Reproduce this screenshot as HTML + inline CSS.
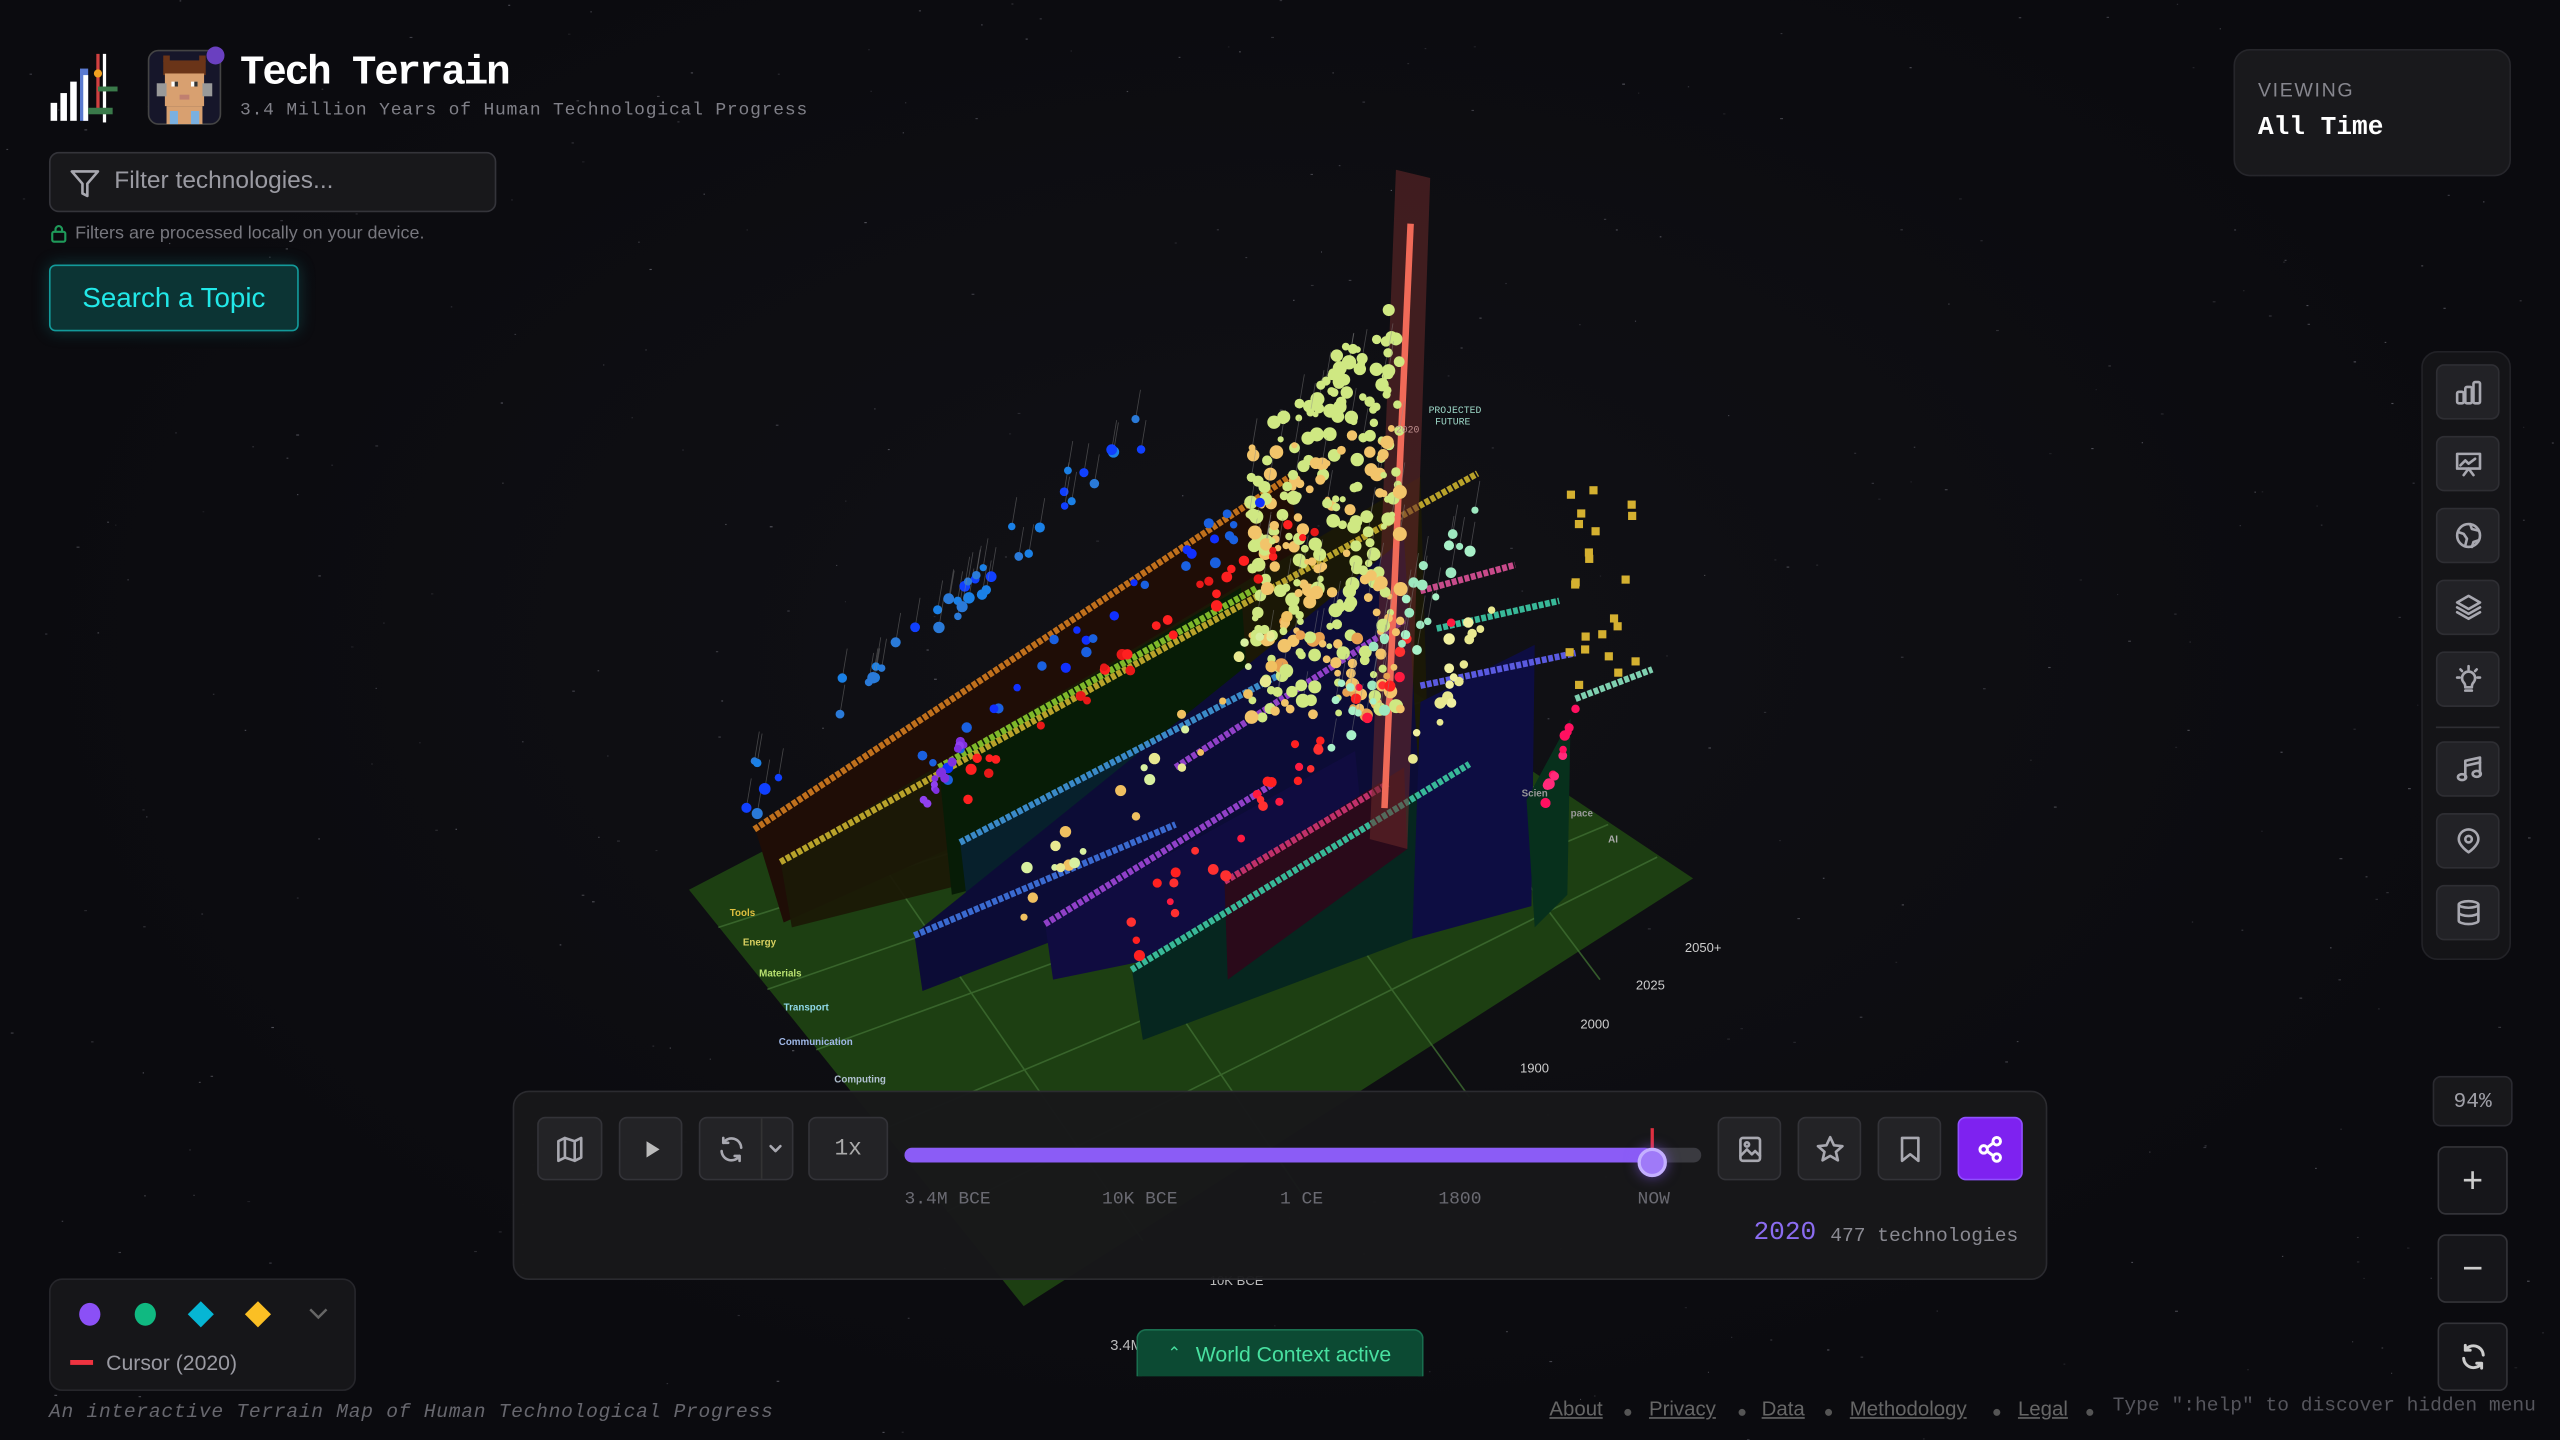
<!DOCTYPE html>
<html><head><meta charset="utf-8">
<style>
*{box-sizing:border-box;margin:0;padding:0}
html,body{width:2560px;height:1440px;overflow:hidden;background:#0b0b0f}
#root{position:absolute;left:0;top:0;width:1568px;height:882px;transform:scale(1.632653);transform-origin:0 0;font-family:"Liberation Sans",sans-serif;color:#ddd;
background:radial-gradient(ellipse at 50% 45%,#111116 0%,#0b0b0f 70%)}
.abs{position:absolute}
.mono{font-family:"Liberation Mono",monospace}
.btn{position:absolute;background:#232326;border:1px solid #333338;border-radius:5px;display:flex;align-items:center;justify-content:center}
.tb{position:absolute;left:8px;width:39px;height:34px;background:#222226;border:1px solid #2e2e33;border-radius:5px;display:flex;align-items:center;justify-content:center}
svg.ic{fill:none;stroke:#a8a8b0;stroke-width:1.6;stroke-linecap:round;stroke-linejoin:round}
.lk{position:absolute;top:856px;font-size:12.5px;color:#666;text-decoration:underline}
.dot{position:absolute;top:860px;font-size:10px;color:#555}
</style></head><body>
<div id="root">
<svg id="stars" class="abs" style="left:0;top:0" width="1568" height="882"></svg>

<svg id="terr" class="abs" style="left:0;top:0" width="1568" height="882">
 <polygon points="422,545 627,800 1037,538 860,420 700,400" fill="#1d3f12"/>
 <g stroke="#3f6e32" stroke-width="1" opacity=".8">
  <line x1="440" y1="568" x2="870" y2="430"/><line x1="470" y1="606" x2="905" y2="455"/>
  <line x1="500" y1="643" x2="945" y2="480"/><line x1="540" y1="692" x2="985" y2="505"/>
  <line x1="580" y1="742" x2="1015" y2="525"/>
  <line x1="520" y1="500" x2="700" y2="760"/><line x1="620" y1="470" x2="800" y2="735"/>
  <line x1="740" y1="450" x2="900" y2="672"/><line x1="860" y1="440" x2="980" y2="600"/>
 </g>
 <polygon points="462,506 790,290 805,420 480,565" fill="#1f0d06"/>
 <polygon points="478,527 870,292 875,470 485,568" fill="#1b1906" opacity=".95"/>
 <polygon points="575,470 760,360 770,500 583,548" fill="#071c06"/>
 <polygon points="588,515 790,410 800,530 596,585" fill="#07202c"/>
 <polygon points="560,572 860,330 870,490 565,607" fill="#0c0c36"/>
 <polygon points="640,565 830,460 840,560 645,600" fill="#100c40"/>
 <polygon points="693,592 900,465 905,560 700,637" fill="#06261f"/>
 <polygon points="750,540 860,470 862,520 752,600" fill="#2a0a1a"/>
 <polygon points="865,575 870,430 940,395 938,555" fill="#0d0d42"/>
 <polygon points="935,490 962,440 960,548 940,568" fill="#07301c"/>
 <g stroke-width="4" stroke-dasharray="3 1" fill="none">
  <line x1="462" y1="508" x2="790" y2="292" stroke="#c0701c"/>
  <line x1="478" y1="528" x2="905" y2="290" stroke="#b8a22a"/>
  <line x1="575" y1="470" x2="770" y2="360" stroke="#7fb82a"/>
  <line x1="588" y1="516" x2="790" y2="410" stroke="#3a8ac8"/>
  <line x1="560" y1="573" x2="720" y2="505" stroke="#3a6ad0"/>
  <line x1="640" y1="566" x2="780" y2="480" stroke="#9040c8"/>
  <line x1="720" y1="470" x2="860" y2="380" stroke="#9040c8"/>
  <line x1="693" y1="594" x2="900" y2="468" stroke="#38b898"/>
  <line x1="750" y1="540" x2="850" y2="480" stroke="#c0306a"/>
  <line x1="870" y1="362" x2="928" y2="346" stroke="#c84a8a"/>
  <line x1="870" y1="420" x2="965" y2="400" stroke="#5a5ae0"/>
  <line x1="880" y1="385" x2="955" y2="368" stroke="#38b898"/>
  <line x1="965" y1="428" x2="1012" y2="410" stroke="#7fd0b0"/>
 </g>
 <polygon points="855,104 876,109 862,520 839,514" fill="#6a2a2a" opacity=".55"/>
 <line x1="864" y1="137" x2="848" y2="495" stroke="#f06a58" stroke-width="4"/>
 <g id="dots"></g>
 <g font-family="Liberation Sans,sans-serif" font-size="6" font-weight="bold">
  <text x="447" y="561" fill="#e0c040">Tools</text>
  <text x="455" y="579" fill="#d8d060">Energy</text>
  <text x="465" y="598" fill="#b8e070">Materials</text>
  <text x="480" y="619" fill="#90d8e8">Transport</text>
  <text x="477" y="640" fill="#a0b8e8">Communication</text>
  <text x="511" y="663" fill="#b0c0d0">Computing</text>
  <text x="985" y="516" fill="#aaa">AI</text>
  <text x="962" y="500" fill="#999">pace</text>
  <text x="932" y="488" fill="#999">Scien</text>
 </g>
 <g font-family="Liberation Sans,sans-serif" font-size="8" fill="#ccc">
  <text x="1032" y="583">2050+</text><text x="1002" y="606">2025</text>
  <text x="968" y="630">2000</text><text x="931" y="657">1900</text>
 </g>
 <text x="875" y="253" font-family="Liberation Mono,monospace" font-size="6" fill="#9ed8c8">PROJECTED</text>
 <text x="879" y="260" font-family="Liberation Mono,monospace" font-size="6" fill="#9ed8c8">FUTURE</text>
 <text x="855" y="265" font-family="Liberation Mono,monospace" font-size="6" fill="#c09090">2020</text>
 <text x="741" y="787" font-family="Liberation Sans,sans-serif" font-size="8" fill="#bbb">10K BCE</text>
 <text x="680" y="827" font-family="Liberation Sans,sans-serif" font-size="9" fill="#bbb">3.4M BCE</text>
</svg>

<svg class="abs" style="left:30px;top:32px" width="48" height="44">
 <rect x="1" y="31" width="4" height="11" fill="#fff"/><rect x="7" y="25" width="4" height="17" fill="#fff"/>
 <rect x="13" y="18" width="4" height="24" fill="#fff"/><rect x="19" y="10" width="5" height="32" fill="#5a7ad0"/>
 <rect x="21" y="14" width="3" height="28" fill="#fff"/><rect x="29" y="1" width="2" height="34" fill="#d04040"/>
 <rect x="33" y="1" width="2" height="42" fill="#fff"/><rect x="24" y="34" width="15" height="4" fill="#3a7a4a"/>
 <rect x="30" y="21" width="12" height="3" fill="#3a7a4a"/><circle cx="30" cy="13" r="2.5" fill="#f0a020"/>
</svg>
<svg class="abs" style="left:90px;top:28px" width="50" height="50">
 <rect x="1" y="3" width="44" height="45" rx="6" fill="#16162a" stroke="#444" stroke-width="1"/>
 <rect x="10" y="9" width="26" height="9" fill="#6a3418"/><rect x="10" y="6" width="4" height="4" fill="#6a3418"/><rect x="32" y="6" width="4" height="4" fill="#6a3418"/>
 <rect x="11" y="17" width="24" height="20" fill="#d8a070"/><rect x="6" y="23" width="6" height="8" fill="#999"/><rect x="34" y="23" width="6" height="8" fill="#999"/>
 <rect x="15" y="22" width="4" height="3" fill="#fff"/><rect x="27" y="22" width="4" height="3" fill="#fff"/>
 <rect x="17" y="22" width="2" height="3" fill="#333"/><rect x="29" y="22" width="2" height="3" fill="#333"/>
 <rect x="20" y="30" width="6" height="3" fill="#c08070"/>
 <rect x="12" y="37" width="22" height="11" fill="#d8a070"/><rect x="14" y="40" width="5" height="8" fill="#7ab0e0"/><rect x="27" y="40" width="5" height="8" fill="#7ab0e0"/>
 <circle cx="42" cy="6" r="5.5" fill="#6a40c0"/>
</svg>
<div class="abs mono" style="left:147px;top:30px;font-size:25px;font-weight:bold;color:#fff;letter-spacing:-1.3px">Tech Terrain</div>
<div class="abs mono" style="left:147px;top:62px;font-size:11px;color:#808088;letter-spacing:0.5px">3.4 Million Years of Human Technological Progress</div>

<div class="abs" style="left:30px;top:93px;width:274px;height:37px;background:#18181b;border:1px solid #34343a;border-radius:6px"></div>
<svg class="abs ic" style="left:42px;top:102px" width="20" height="20" viewBox="0 0 20 20"><path d="M2 3h16l-6.5 7.5V18l-3-1.5v-6z"/></svg>
<div class="abs" style="left:70px;top:102px;font-size:15px;color:#9a9aa2">Filter technologies...</div>
<svg class="abs" style="left:30px;top:137px" width="12" height="12" viewBox="0 0 12 12" fill="none" stroke="#1f9a5a" stroke-width="1.3"><rect x="2" y="5" width="8" height="6" rx="1"/><path d="M4 5V3.5a2 2 0 014 0V5"/></svg>
<div class="abs" style="left:46px;top:137px;font-size:11px;color:#77777e">Filters are processed locally on your device.</div>
<div class="abs" style="left:30px;top:162px;width:153px;height:41px;background:#0c3434;border:1.5px solid #139a9a;border-radius:4px;box-shadow:0 0 10px rgba(20,180,180,.25);color:#22e8e8;font-size:17px;display:flex;align-items:center;justify-content:center">Search a Topic</div>

<div class="abs" style="left:1368px;top:30px;width:170px;height:78px;background:#19191c;border:1px solid #26262b;border-radius:10px"></div>
<div class="abs" style="left:1383px;top:48px;font-size:12px;color:#86868e;letter-spacing:1px">VIEWING</div>
<div class="abs mono" style="left:1383px;top:69px;font-size:16px;font-weight:bold;color:#fff">All Time</div>

<div class="abs" style="left:1483px;top:215px;width:55px;height:373px;background:#141417;border:1px solid #222227;border-radius:10px">
 <div class="tb" style="top:7px"><svg class="ic" width="18" height="18" viewBox="0 0 18 18"><rect x="2" y="9" width="4" height="7" rx="1"/><rect x="7" y="6" width="4" height="10" rx="1"/><rect x="12" y="3" width="4" height="13" rx="1"/></svg></div>
 <div class="tb" style="top:51px"><svg class="ic" width="18" height="18" viewBox="0 0 18 18"><rect x="2" y="3" width="14" height="9"/><path d="M4 10l3-3 2 2 4-3M6 16l3-4 3 4"/></svg></div>
 <div class="tb" style="top:95px"><svg class="ic" width="18" height="18" viewBox="0 0 18 18"><circle cx="9" cy="9" r="7"/><path d="M3 7l3 1 2 3-1 4M10 2l1 3 4 1M11 16l1-3 3-1"/></svg></div>
 <div class="tb" style="top:139px"><svg class="ic" width="18" height="18" viewBox="0 0 18 18"><path d="M9 2l7 4-7 4-7-4zM2 9l7 4 7-4M2 12l7 4 7-4"/></svg></div>
 <div class="tb" style="top:183px"><svg class="ic" width="18" height="18" viewBox="0 0 18 18"><path d="M6 11a4 4 0 116 0c-1 1-1 2-1 3H7c0-1 0-2-1-3zM7 16h4M9 1v2M2 8h1.5M14.5 8H16M4 3l1 1M14 3l-1 1"/></svg></div>
 <div style="position:absolute;left:8px;top:229px;width:39px;height:1px;background:#2e2e33"></div>
 <div class="tb" style="top:238px"><svg class="ic" width="18" height="18" viewBox="0 0 18 18"><path d="M7 14V4l9-2v10"/><ellipse cx="5" cy="14" rx="2.5" ry="1.8"/><ellipse cx="14" cy="12" rx="2.5" ry="1.8"/><path d="M7 7l9-2"/></svg></div>
 <div class="tb" style="top:282px"><svg class="ic" width="18" height="18" viewBox="0 0 18 18"><path d="M9 16s-6-4-6-8a6 6 0 0112 0c0 4-6 8-6 8z"/><circle cx="9" cy="8" r="2"/></svg></div>
 <div class="tb" style="top:326px"><svg class="ic" width="18" height="18" viewBox="0 0 18 18"><ellipse cx="9" cy="4" rx="6" ry="2"/><path d="M3 4v10c0 1 3 2 6 2s6-1 6-2V4M3 9c0 1 3 2 6 2s6-1 6-2"/></svg></div>
</div>

<div class="abs mono" style="left:1490px;top:659px;width:49px;height:31px;background:#18181b;border:1px solid #2a2a30;border-radius:5px;color:#a0a0a8;font-size:13px;display:flex;align-items:center;justify-content:center">94%</div>
<div class="btn" style="left:1493px;top:702px;width:43px;height:42px;background:#16161a;color:#ccc;font-size:22px;font-weight:300">+</div>
<div class="btn" style="left:1493px;top:756px;width:43px;height:42px;background:#16161a;color:#ccc;font-size:22px">−</div>
<div class="btn" style="left:1493px;top:810px;width:43px;height:42px;background:#16161a"><svg class="ic" width="18" height="18" viewBox="0 0 18 18" style="stroke:#ccc;stroke-width:1.8"><path d="M15 8a6 6 0 00-11-3M3 10a6 6 0 0011 3M4 2v3h3M14 16v-3h-3"/></svg></div>

<div class="abs" style="left:314px;top:668px;width:940px;height:116px;background:#18181a;border:1px solid #2c2c31;border-radius:10px;opacity:.97"></div>
<div class="btn" style="left:329px;top:684px;width:40px;height:39px"><svg class="ic" width="18" height="18" viewBox="0 0 18 18"><path d="M2 4l4-2 6 2 4-2v12l-4 2-6-2-4 2zM6 2v12M12 4v12"/></svg></div>
<div class="btn" style="left:379px;top:684px;width:39px;height:39px"><svg width="12" height="12" viewBox="0 0 12 12"><path d="M3 1l8 5-8 5z" fill="#bbb"/></svg></div>
<div class="btn" style="left:428px;top:684px;width:58px;height:39px;justify-content:flex-start;padding-left:10px"><svg class="ic" width="18" height="18" viewBox="0 0 18 18"><path d="M15 8a6 6 0 00-11-3M3 10a6 6 0 0011 3M4 2v3h3M14 16v-3h-3"/></svg><div style="position:absolute;left:37px;top:0;width:1px;height:37px;background:#333"></div><svg class="ic" style="position:absolute;left:41px;top:14px" width="10" height="10" viewBox="0 0 10 10"><path d="M2 3l3 3 3-3"/></svg></div>
<div class="btn mono" style="left:495px;top:684px;width:49px;height:39px;color:#aaa;font-size:14px">1x</div>
<div class="abs" style="left:554px;top:703px;width:488px;height:9px;background:#3a3a40;border-radius:5px"></div>
<div class="abs" style="left:554px;top:703px;width:458px;height:9px;background:#8b5cf6;border-radius:5px"></div>
<div class="abs" style="left:1011px;top:691px;width:2px;height:14px;background:#e03040"></div>
<div class="abs" style="left:1003px;top:703px;width:18px;height:18px;background:#9f7af8;border:2px solid #c4b0ff;border-radius:50%;box-shadow:0 0 8px rgba(139,92,246,.6)"></div>
<div class="abs mono" style="top:729px;left:554px;font-size:11px;color:#6a6a72">3.4M BCE</div>
<div class="abs mono" style="top:729px;left:675px;font-size:11px;color:#6a6a72">10K BCE</div>
<div class="abs mono" style="top:729px;left:784px;font-size:11px;color:#6a6a72">1 CE</div>
<div class="abs mono" style="top:729px;left:881px;font-size:11px;color:#6a6a72">1800</div>
<div class="abs mono" style="top:729px;left:1003px;font-size:11px;color:#6a6a72">NOW</div>
<div class="btn" style="left:1052px;top:684px;width:39px;height:39px"><svg class="ic" width="18" height="18" viewBox="0 0 18 18"><rect x="3" y="2" width="12" height="14" rx="1.5"/><circle cx="7" cy="6" r="1.3"/><path d="M3 13l4-4 3 3 2-2 3 3"/></svg></div>
<div class="btn" style="left:1101px;top:684px;width:39px;height:39px"><svg class="ic" width="18" height="18" viewBox="0 0 18 18"><path d="M9 1.5l2.3 5 5.2.5-4 3.5 1.2 5.2L9 13l-4.7 2.7 1.2-5.2-4-3.5 5.2-.5z"/></svg></div>
<div class="btn" style="left:1150px;top:684px;width:39px;height:39px"><svg class="ic" width="18" height="18" viewBox="0 0 18 18"><path d="M4 2h10v14l-5-4-5 4z"/></svg></div>
<div class="btn" style="left:1199px;top:684px;width:40px;height:39px;background:#7e22f0;border-color:#9050ff"><svg class="ic" width="18" height="18" viewBox="0 0 18 18" style="stroke:#fff;stroke-width:1.8"><circle cx="13" cy="4" r="2.3"/><circle cx="5" cy="9" r="2.3"/><circle cx="13" cy="14" r="2.3"/><path d="M7 8l4-3M7 10l4 3"/></svg></div>
<div class="abs mono" style="left:1074px;top:746px;font-size:16px;color:#8b6cf0">2020</div>
<div class="abs mono" style="left:1121px;top:750px;font-size:12px;color:#8a8a92">477 technologies</div>

<div class="abs" style="left:696px;top:814px;width:176px;height:29px;background:#0c4a33;border:1px solid #1a7050;border-bottom:none;border-radius:6px 6px 0 0;color:#48e0a0;font-size:13px;display:flex;align-items:center;padding-left:18px"><span style="font-size:10px;margin-right:9px">⌃</span>World Context active</div>

<div class="abs" style="left:30px;top:783px;width:188px;height:69px;background:#161619;border:1px solid #26262b;border-radius:8px"></div>
<svg class="abs" style="left:44px;top:795px" width="160" height="20">
 <ellipse cx="11" cy="10" rx="6.5" ry="7" fill="#8b50f6"/>
 <ellipse cx="45" cy="10" rx="6.5" ry="7" fill="#10b981"/>
 <path d="M79 2l8 8-8 8-8-8z" fill="#06b6d4"/>
 <path d="M114 2l8 8-8 8-8-8z" fill="#fbbf24"/>
 <path d="M146 7l5 5 5-5" fill="none" stroke="#666" stroke-width="1.5"/>
</svg>
<div class="abs" style="left:43px;top:833px;width:14px;height:3px;background:#ef3340"></div>
<div class="abs" style="left:65px;top:827px;font-size:13px;color:#9a9aa2">Cursor (2020)</div>

<div class="abs mono" style="left:30px;top:858px;font-size:12px;font-style:italic;color:#67676e;letter-spacing:0.45px">An interactive Terrain Map of Human Technological Progress</div>
<div class="lk" style="left:949px">About</div><div class="dot" style="left:994px">●</div>
<div class="lk" style="left:1010px">Privacy</div><div class="dot" style="left:1064px">●</div>
<div class="lk" style="left:1079px">Data</div><div class="dot" style="left:1117px">●</div>
<div class="lk" style="left:1133px">Methodology</div><div class="dot" style="left:1220px">●</div>
<div class="lk" style="left:1236px">Legal</div><div class="dot" style="left:1277px">●</div>
<div class="abs mono" style="left:1294px;top:854px;font-size:12px;color:#55555c">Type ":help" to discover hidden menu</div>
</div>
<script>
(function(){
var s=12345;function r(){s=(s*16807)%2147483647;return s/2147483647;}
var NS="http://www.w3.org/2000/svg";
var st=document.getElementById("stars");
for(var i=0;i<420;i++){var c=document.createElementNS(NS,"rect");c.setAttribute("x",(r()*1568).toFixed(1));c.setAttribute("y",(r()*882).toFixed(1));c.setAttribute("width",(0.6+r()*1.2).toFixed(1));c.setAttribute("height","0.7");c.setAttribute("fill","#8a8a95");c.setAttribute("opacity",(0.15+r()*0.4).toFixed(2));st.appendChild(c);}
var g=document.getElementById("dots");
function dot(x,y,rad,col,stem){if(stem){var l=document.createElementNS(NS,"line");l.setAttribute("x1",x);l.setAttribute("y1",y);l.setAttribute("x2",x+3);l.setAttribute("y2",y-18);l.setAttribute("stroke","#888");l.setAttribute("stroke-width","0.5");l.setAttribute("opacity","0.45");g.appendChild(l);}
var c=document.createElementNS(NS,"circle");c.setAttribute("cx",x.toFixed(1));c.setAttribute("cy",y.toFixed(1));c.setAttribute("r",rad.toFixed(1));c.setAttribute("fill",col);g.appendChild(c);}
function line(n,x1,y1,x2,y2,spread,cols,rmin,rmax,stem){for(var i=0;i<n;i++){var t=r();var x=x1+(x2-x1)*t+(r()-0.5)*spread*0.5;var y=y1+(y2-y1)*t-r()*spread;dot(x,y,rmin+r()*(rmax-rmin),cols[Math.floor(r()*cols.length)],stem);}}
for(var i=0;i<330;i++){var x=765+r()*93;var top=178+(858-x)*1.0;var y=top+r()*(440-top);var col=(y>260&&r()<0.45)?"#f2c46a":"#cfe882";if(y>380&&r()<0.2)col="#e8a050";dot(x,y,1.8+r()*2.6,col,r()<0.25);}
line(45,458,500,700,275,28,["#1a80e6","#2a7ad8","#1040ff"],2.2,3.6,true);
line(30,560,490,770,320,30,["#1030ff","#1a60e0"],2.2,3.4,false);
line(30,575,505,800,330,25,["#ff2020","#e81818"],2.2,3.5,false);
line(35,690,595,900,370,30,["#ff2020","#ff3030","#ff1a40"],2,3.5,false);
line(30,820,470,900,340,40,["#9de8c0","#a8f0c8"],2,3.5,true);
line(30,625,570,790,400,30,["#e8e890","#f0c060","#d8f0a0"],2,3.6,false);
line(12,945,500,965,435,6,["#ff2a7a","#ff1060"],2.2,3.4,false);
line(18,860,470,915,390,30,["#e8e890","#f0f0a0"],2,3.5,false);
line(14,565,500,590,460,10,["#8030e0","#9040f0"],2,3,false);
for(var i=0;i<22;i++){var x=955+r()*45,y=290+r()*130;var q=document.createElementNS(NS,"rect");q.setAttribute("x",x.toFixed(1));q.setAttribute("y",y.toFixed(1));q.setAttribute("width","5");q.setAttribute("height","5");q.setAttribute("fill","#d4b030");q.setAttribute("transform","skewY(-15 "+x+" "+y+")");g.appendChild(q);}
})();
</script>
</body></html>
